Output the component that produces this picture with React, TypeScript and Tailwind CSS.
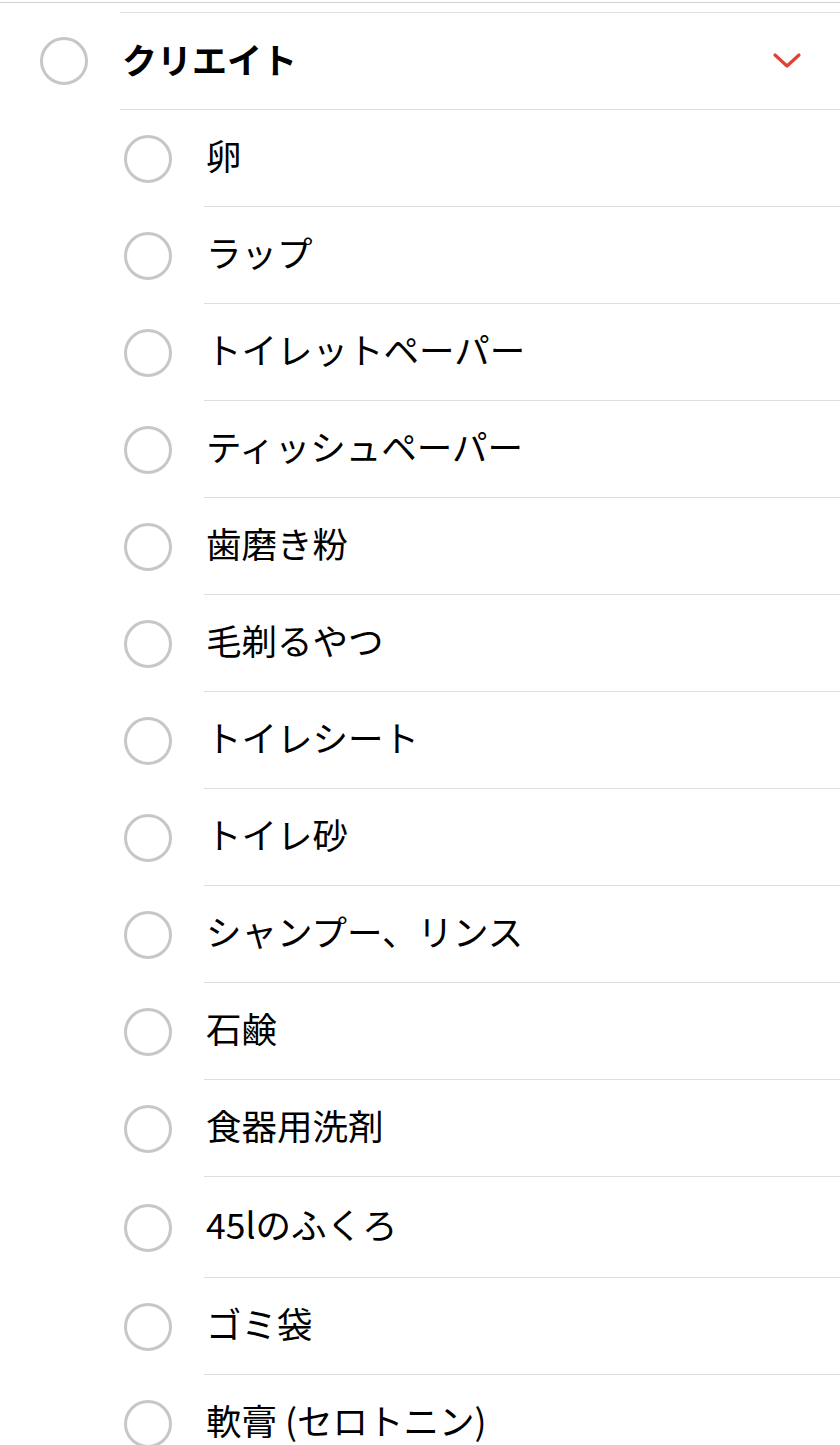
const ITEMS = [
  '卵',
  'ラップ',
  'トイレットペーパー',
  'ティッシュペーパー',
  '歯磨き粉',
  '毛剃るやつ',
  'トイレシート',
  'トイレ砂',
  'シャンプー、リンス',
  '石鹸',
  '食器用洗剤',
  '45lのふくろ',
  'ゴミ袋',
  '軟膏 (セロトニン)',
];

const FONT = "font-['Noto_Sans_CJK_JP','Noto_Sans',sans-serif]";

function Circle() {
  return <div className="h-[48px] w-[48px] shrink-0 rounded-full border-[3px] border-[#c7c7c7]" />;
}

function ChevronDown() {
  return (
    <svg width="30" height="18" viewBox="0 0 30 18" fill="none">
      <polyline
        points="3,3 15,14 27,3"
        stroke="#e3402f"
        strokeWidth="3.2"
        strokeLinecap="round"
        strokeLinejoin="round"
      />
    </svg>
  );
}

function ItemRow({ label }: { label: string }) {
  // the 45l row renders a bit taller in the reference
  const tall = label.startsWith('45');
  return (
    <div className="flex">
      <div className="flex w-[204px] shrink-0 items-center pl-[124px]">
        <Circle />
      </div>
      <div
        className={`flex flex-1 items-center border-b border-[#dedede] pl-[2px] ${
          tall ? 'h-[101px]' : 'h-[97px]'
        }`}>
        <span className="-translate-y-[3px] text-[35.5px] leading-none text-black">{label}</span>
      </div>
    </div>
  );
}

export default function App() {
  return (
    <div className={`h-[1445px] w-[840px] overflow-hidden bg-white ${FONT}`}>
      <div className="mt-[2px] border-t border-[#d2d2d2]" />
      <div className="h-[9px]" />
      <div className="flex">
        <div className="flex w-[120px] shrink-0 items-center pl-[40px]">
          <Circle />
        </div>
        <div className="flex h-[98px] flex-1 items-center justify-between border-y border-[#dedede] pl-[2px] pr-[38px]">
          <span className="-translate-y-[3px] text-[35px] font-bold leading-none text-black">
            クリエイト
          </span>
          <ChevronDown />
        </div>
      </div>
      {ITEMS.map((item) => (
        <ItemRow key={item} label={item} />
      ))}
    </div>
  );
}
